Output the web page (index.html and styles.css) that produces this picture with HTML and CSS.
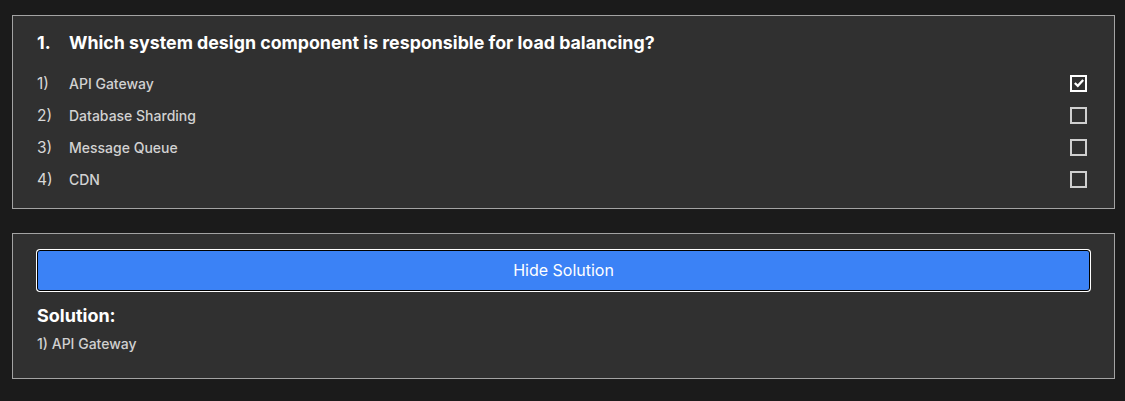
FILE: index.html
```html
<!DOCTYPE html>
<html>
<head>
<meta charset="utf-8">
<link rel="stylesheet" href="styles.css">
</head>
<body>
<div class="page">
  <section class="card question">
    <h2 class="title"><span class="num">1.</span><span>Which system design component is responsible for load balancing?</span></h2>
    <ul class="options">
      <li class="option"><span class="onum">1)</span><span class="label">API Gateway</span><span class="box checked"><svg viewBox="0 0 12 12" width="12" height="12"><path d="M1.8 6 L4.8 8.8 L10.2 3" fill="none" stroke="#fff" stroke-width="2.3"/></svg></span></li>
      <li class="option"><span class="onum">2)</span><span class="label">Database Sharding</span><span class="box"></span></li>
      <li class="option"><span class="onum">3)</span><span class="label">Message Queue</span><span class="box"></span></li>
      <li class="option"><span class="onum">4)</span><span class="label">CDN</span><span class="box"></span></li>
    </ul>
  </section>
  <section class="card solution">
    <button class="btn">Hide Solution</button>
    <h3 class="sol-title">Solution:</h3>
    <p class="sol-text">1) API Gateway</p>
  </section>
</div>
</body>
</html>
```

FILE: styles.css
```css
* { box-sizing: border-box; }
html, body { margin: 0; padding: 0; background: #1b1b1b; }
body { font-family: Inter, "Noto Sans", sans-serif; color: #fff; }
.page { padding: 15px 10px 0 12px; display: flex; flex-direction: column; gap: 24px; }
.card { background: #303030; border: 1px solid #a3a3a3; padding: 16px 24px; }
.question { padding-top: 15px; padding-bottom: 13px; }
.title { margin: 0 0 12px; font-size: 17.8px; font-weight: 700; line-height: 24px; display: flex; }
.num { width: 32px; flex: none; }
.options { list-style: none; margin: 0; padding: 0; display: flex; flex-direction: column; }
.option { display: flex; align-items: center; height: 32px; font-size: 14px; font-weight: 500; }
.onum { width: 32px; flex: none; color: #d8d8d8; font-size: 15.5px; font-weight: 400; }
.label { flex: 1; color: #d2d2d2; }
.box { width: 17px; height: 17px; border: 2px solid #cfcfcf; margin-right: 3px; display: flex; align-items: center; justify-content: center; }
.box.checked { border-color: #fff; }
.btn { display: block; width: 100%; height: 41px; background: #3b82f6; color: #fff; border: 1px solid #000; border-radius: 3px; box-shadow: 0 0 0 1px #fff; font-family: Inter, sans-serif; font-size: 16px; line-height: 20px; padding: 0 0 1px; cursor: pointer; }
.sol-title { margin: 13px 0 0; font-size: 18px; font-weight: 700; line-height: 24px; }
.sol-text { margin: 6px 0 0; font-size: 14px; font-weight: 500; color: #d0d0d0; line-height: 20px; padding-bottom: 8px; }
```
